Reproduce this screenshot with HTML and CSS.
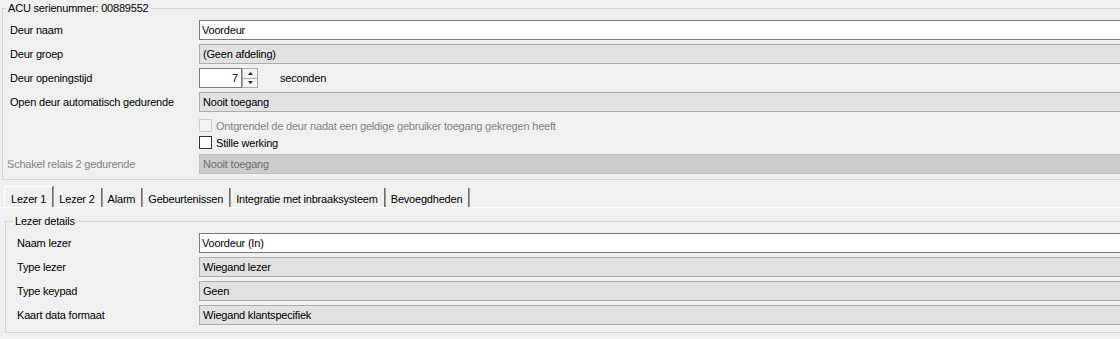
FILE: index.html
```html
<!DOCTYPE html>
<html>
<head>
<meta charset="utf-8">
<link rel="stylesheet" href="styles.css">
</head>
<body>
<fieldset class="group group-door">
  <legend class="group-title">ACU serienummer: 00889552</legend>
  <div class="form">
    <div class="row first">
      <div class="label">Deur naam</div>
      <div class="field textbox">Voordeur</div>
    </div>
    <div class="row">
      <div class="label">Deur groep</div>
      <div class="field combo">(Geen afdeling)</div>
    </div>
    <div class="row">
      <div class="label">Deur openingstijd</div>
      <div class="spin">
        <div class="spinbox">7</div>
        <div class="spinbtns">
          <div class="spinbtn"><svg width="5" height="3" viewBox="0 0 5 3"><polygon points="2.5,0 5,3 0,3" fill="#222"/></svg></div>
          <div class="spinbtn"><svg width="5" height="3" viewBox="0 0 5 3"><polygon points="0,0 5,0 2.5,3" fill="#222"/></svg></div>
        </div>
      </div>
      <div class="unit">seconden</div>
    </div>
    <div class="row">
      <div class="label">Open deur automatisch gedurende</div>
      <div class="field combo">Nooit toegang</div>
    </div>
    <div class="row check check-first">
      <div class="label"></div>
      <div class="checkbox disabled"></div>
      <div class="check-text disabled-text">Ontgrendel de deur nadat een geldige gebruiker toegang gekregen heeft</div>
    </div>
    <div class="row check">
      <div class="label"></div>
      <div class="checkbox"></div>
      <div class="check-text">Stille werking</div>
    </div>
    <div class="row relay">
      <div class="label disabled-text label-relay">Schakel relais 2 gedurende</div>
      <div class="field combo disabled">Nooit toegang</div>
    </div>
  </div>
</fieldset>

<div class="tabs">
  <div class="tab active">Lezer 1</div>
  <div class="tab">Lezer 2</div>
  <div class="tab">Alarm</div>
  <div class="tab">Gebeurtenissen</div>
  <div class="tab">Integratie met inbraaksysteem</div>
  <div class="tab">Bevoegdheden</div>
</div>

<div class="tabpage">
  <fieldset class="group group-reader">
    <legend class="group-title">Lezer details</legend>
    <div class="form">
      <div class="row first">
        <div class="label">Naam lezer</div>
        <div class="field textbox">Voordeur (In)</div>
      </div>
      <div class="row">
        <div class="label">Type lezer</div>
        <div class="field combo">Wiegand lezer</div>
      </div>
      <div class="row">
        <div class="label">Type keypad</div>
        <div class="field combo">Geen</div>
      </div>
      <div class="row">
        <div class="label">Kaart data formaat</div>
        <div class="field combo">Wiegand klantspecifiek</div>
      </div>
    </div>
  </fieldset>
</div>
</body>
</html>
```

FILE: styles.css
```css
html, body {
  margin: 0;
  padding: 0;
}
body {
  width: 1120px;
  height: 339px;
  overflow: hidden;
  background: #f0f0f0;
  font-family: "Liberation Sans", Arial, sans-serif;
  font-size: 11px;
  letter-spacing: -0.2px;
  color: #000;
}

.group {
  margin: 0;
  padding: 0;
  border: 1px solid #d5d5d5;
  border-right: none;
  min-width: 0;
  box-sizing: border-box;
}
.group-title {
  padding: 0 2px;
  margin-left: 3px;
  line-height: 13px;
  height: 13px;
}

.group-door {
  margin: 2px 0 0 2px;
  width: 1118px;
}

.form {
  display: flex;
  flex-direction: column;
}

.group-door .form {
  padding-bottom: 5px;
}

.row {
  display: flex;
  align-items: center;
  height: 20px;
  margin-top: 4px;
}
.group-door .row.first {
  margin-top: 5px;
}

.label {
  flex: none;
  width: 196px;
  padding-left: 7px;
  box-sizing: border-box;
  white-space: nowrap;
}
.label-relay {
  padding-left: 4px;
}

.field {
  flex: 1;
  min-width: 0;
  height: 20px;
  box-sizing: border-box;
  line-height: 18px;
  white-space: nowrap;
  overflow: hidden;
  border-right: none;
}
.textbox {
  background: #fff;
  border: 1px solid #7a7a7a;
  border-right: none;
  padding-left: 2px;
}
.combo {
  background: #e1e1e1;
  border: 1px solid #adadad;
  border-right: none;
  padding-left: 3px;
}
.combo.disabled {
  background: #cccccc;
  border-color: #bfbfbf;
  color: #6d6d6d;
}

.spin {
  display: flex;
  height: 20px;
}
.spinbox {
  width: 43px;
  height: 20px;
  box-sizing: border-box;
  background: #fff;
  border: 1px solid #7a7a7a;
  text-align: right;
  padding-right: 3px;
  line-height: 18px;
}
.spinbtns {
  display: flex;
  flex-direction: column;
  width: 16px;
  height: 20px;
}
.spinbtn {
  flex: 1;
  box-sizing: border-box;
  border: 1px solid #acacac;
  background: #f4f4f4;
  display: flex;
  align-items: center;
  justify-content: center;
}
.spinbtn + .spinbtn {
  border-top: none;
}
.unit {
  margin-left: 22px;
}

.row.check {
  height: 13px;
}
.row.check-first {
  margin-top: 7px;
}
.row.relay {
  margin-top: 5px;
}
.checkbox {
  flex: none;
  width: 13px;
  height: 13px;
  box-sizing: border-box;
  border: 1px solid #333;
  background: #fff;
}
.checkbox.disabled {
  border-color: #cccccc;
  background: #f4f4f4;
}
.check-text {
  margin-left: 4px;
  white-space: nowrap;
}
.disabled-text {
  color: #838383;
}

.tabs {
  display: flex;
  align-items: flex-end;
  height: 21px;
  margin-top: 6px;
  padding-left: 4px;
}
.tab {
  height: 19px;
  padding: 3px 6px 0;
  border-right: 1px solid #6d6d6d;
  box-shadow: 1px 0 0 #a0a0a0;
  white-space: nowrap;
  box-sizing: border-box;
  line-height: 16px;
}
.tab.active {
  height: 21px;
  border-left: 1px solid #fff;
  border-top: 1px solid #fff;
  padding-top: 4px;
}

.tabpage {
  border-top: 1px solid #fff;
  padding: 7px 0 0 5px;
}
.group-reader {
  width: 1115px;
}
.group-reader .group-title {
  margin-left: 7px;
}
.group-reader .label {
  width: 193px;
  padding-left: 11px;
}
.group-reader .row.first {
  margin-top: 5px;
}
.group-reader .form {
  padding-bottom: 7px;
}
```
